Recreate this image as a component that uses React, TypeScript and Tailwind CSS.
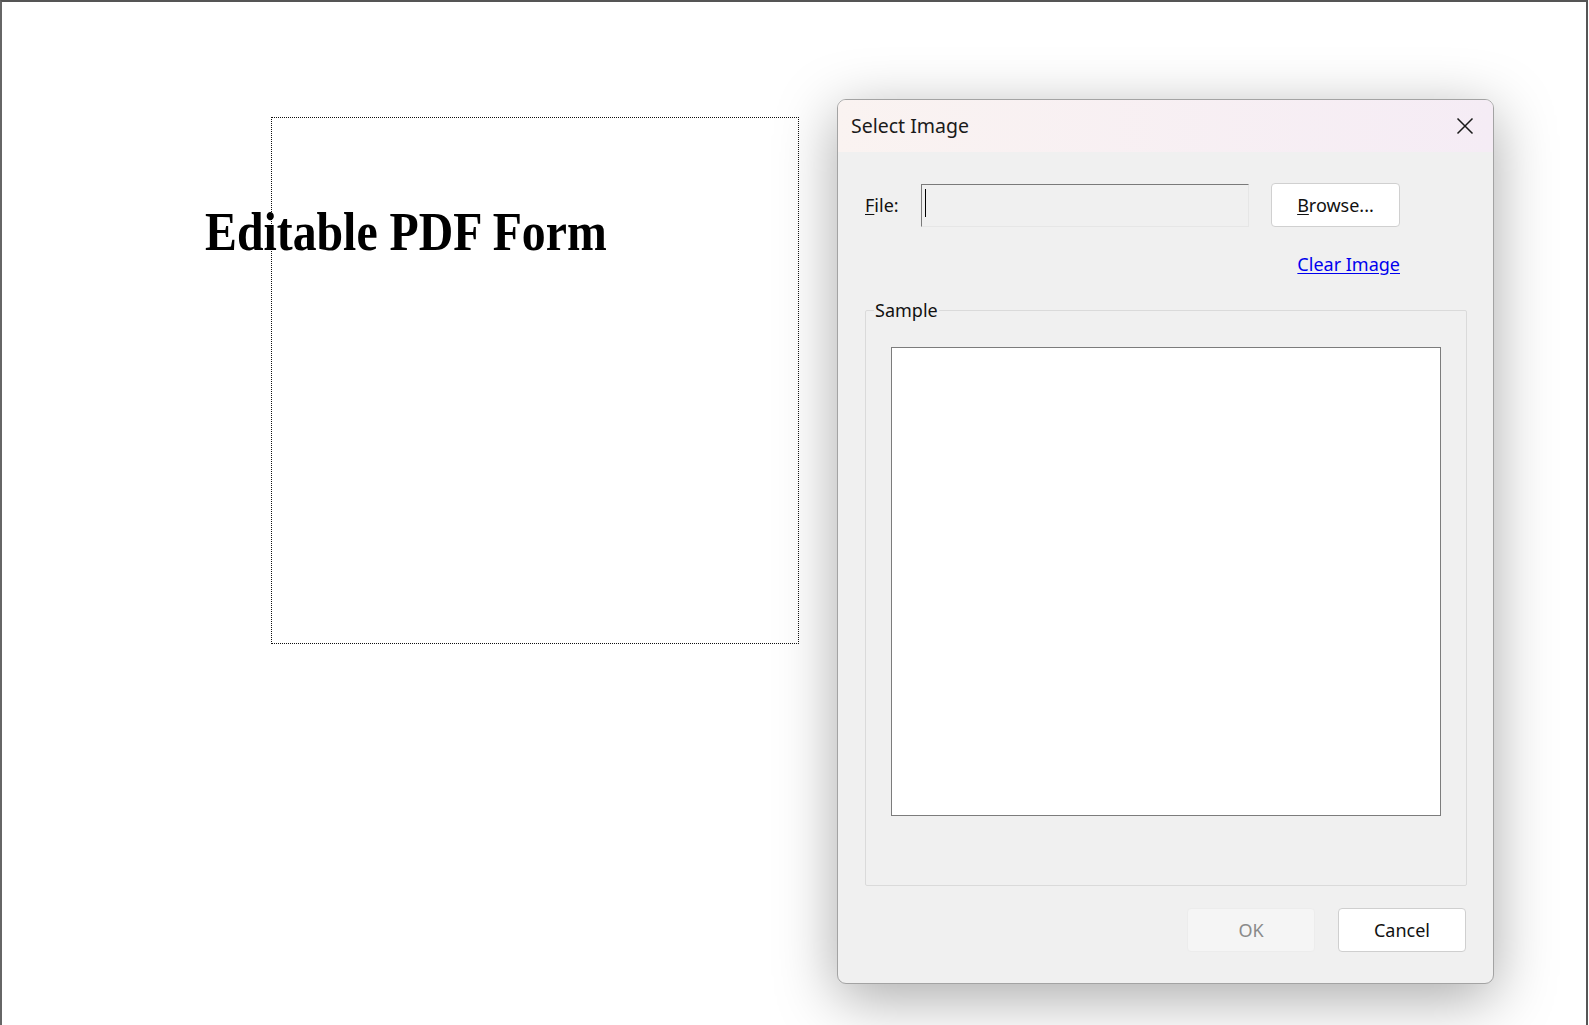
const ui = { fontFamily: '"Noto Sans", "Open Sans", sans-serif' };

function CloseIcon() {
  return (
    <svg width="18" height="18" viewBox="0 0 18 18" className="text-[#1a1a1a]">
      <path d="M1.5 1.5 L16.5 16.5 M16.5 1.5 L1.5 16.5" stroke="currentColor" strokeWidth="1.5" fill="none" />
    </svg>
  );
}

function SelectImageDialog() {
  return (
    <div
      className="absolute left-[837px] top-[99px] flex h-[885px] w-[657px] flex-col overflow-hidden rounded-[9px] border border-[#a3a3a3] bg-[#f0f0f0] shadow-[0_14px_60px_rgba(0,0,0,0.34)]"
      style={ui}
    >
      {/* title bar */}
      <div className="flex h-[52px] shrink-0 items-center justify-between bg-gradient-to-r from-[#faf3f1] to-[#f5ecf5] pl-[13px] pr-[19px]">
        <span className="text-[19.5px] text-[#1a1a1a]">Select Image</span>
        <CloseIcon />
      </div>

      <div className="flex flex-1 flex-col px-[27px] pb-[31px]">
        {/* file row */}
        <div className="mt-[31px] flex items-center">
          <label className="w-[56px] text-[18px] text-[#111]">
            <span className="underline underline-offset-2">F</span>ile:
          </label>
          <div className="relative h-[43px] w-[328px] border border-t-[#7a7a7a] border-l-[#7a7a7a] border-b-[#e6e6e6] border-r-[#e6e6e6] bg-[#f0f0f0]">
            <span className="absolute left-[3px] top-[4px] h-[28px] w-px bg-black" />
          </div>
          <button className="ml-[22px] h-[44px] w-[129px] rounded-[4px] border border-[#d0d0d0] bg-white text-[18px] text-[#111]">
            <span className="underline underline-offset-2">B</span>rowse...
          </button>
        </div>

        {/* clear image */}
        <div className="mr-[66px] mt-[24px] flex justify-end">
          <a className="text-[18px] leading-[26px] text-[#0000ee] underline underline-offset-2">Clear Image</a>
        </div>

        {/* sample group */}
        <fieldset className="mt-[20px] h-[589px] w-[602px] rounded-[2px] border border-[#dadada] px-[25px] pb-[69px] pt-0">
          <legend className="-ml-[17px] px-[1px] text-[18px] text-[#111]">Sample</legend>
          <div className="mt-[23px] h-[469px] w-[550px] border border-[#7c7c7c] bg-white" />
        </fieldset>

        {/* buttons */}
        <div className="mt-auto flex justify-end gap-[23px]">
          <button className="h-[44px] w-[128px] rounded-[4px] border border-[#ececec] bg-[#f5f5f5] text-[18px] text-[#8a8a8a]">
            OK
          </button>
          <button className="h-[44px] w-[128px] rounded-[4px] border border-[#cfcfcf] bg-white text-[18px] text-[#111]">
            Cancel
          </button>
        </div>
      </div>
    </div>
  );
}

export default function App() {
  return (
    <div className="relative h-[1025px] w-[1589px] overflow-hidden bg-white">
      <div className="h-full w-[1588px] border-l-2 border-r-2 border-t-2 border-l-[#666] border-r-[#555] border-t-[#555] bg-white">
        {/* pdf page */}
        <div className="relative ml-[269px] mt-[115px] h-[527px] w-[528px] border border-dotted border-[#111]">
          <h1
            className="absolute -left-[67px] top-[87px] origin-left scale-x-[0.885] whitespace-nowrap text-[54px] font-bold leading-none text-black"
            style={{ fontFamily: '"Liberation Serif", "Times New Roman", serif' }}
          >
            Editable PDF Form
          </h1>
        </div>
      </div>
      <SelectImageDialog />
    </div>
  );
}
